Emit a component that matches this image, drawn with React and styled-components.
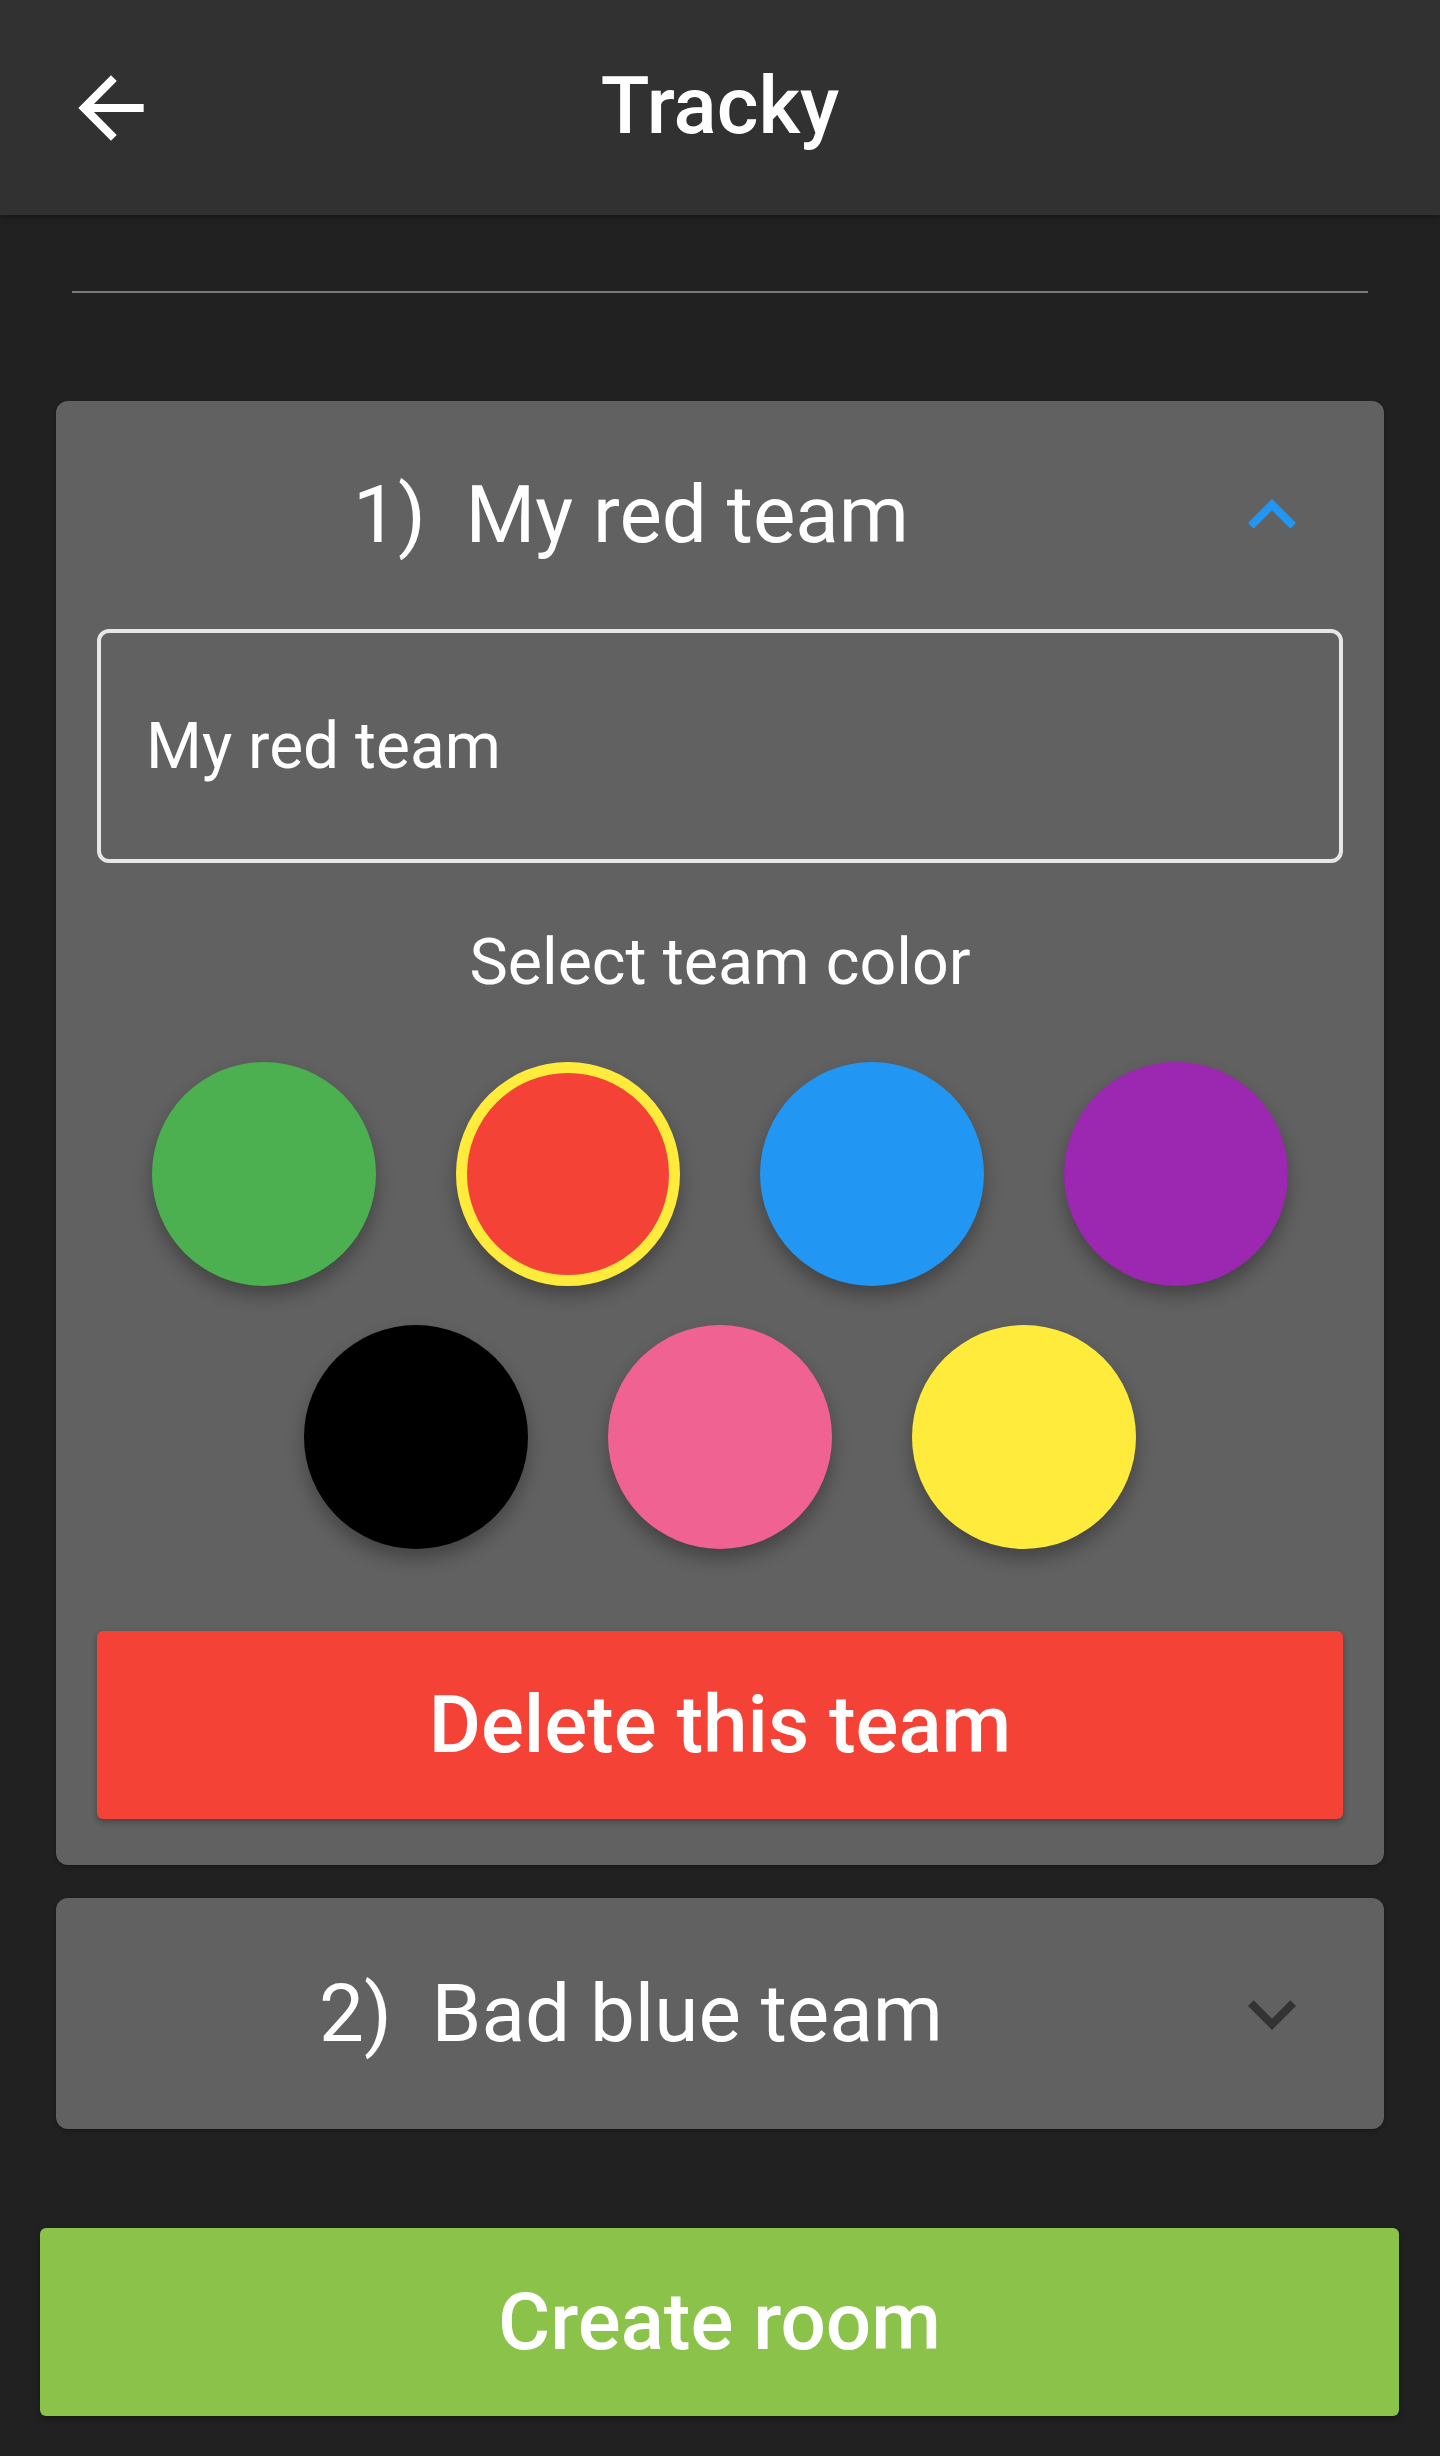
import styled, { createGlobalStyle } from "styled-components";

const GlobalStyle = createGlobalStyle`
* {
  margin: 0;
  padding: 0;
  box-sizing: border-box;
}
body {
  background: #212121;
  font-family: Roboto, "Noto Sans", sans-serif;
  color: #ffffff;
}
`;

const Page = styled.div`
  min-height: 100vh;
  background: #212121;
`;

const TopBar = styled.header`
  height: 215px;
  background: #313131;
  display: grid;
  grid-template-columns: 1fr auto 1fr;
  align-items: center;
  box-shadow: 0 2px 6px rgba(0, 0, 0, 0.35);
  position: relative;
  z-index: 1;
`;

const BackButton = styled.button`
  justify-self: start;
  margin-left: 62px;
  width: 98px;
  height: 98px;
  border: none;
  background: none;
  color: #ffffff;
  display: flex;
  svg {
    width: 98px;
    height: 98px;
  }
`;

const Title = styled.h1`
  font-size: 80px;
  font-weight: 500;
  line-height: 1;
  margin-bottom: 4px;
`;

const Content = styled.main`
  padding: 0 56px;
`;

const Divider = styled.div`
  margin: 76px 16px 0;
  height: 2px;
  background: #7a7a7a;
`;

const CardList = styled.div`
  margin-top: 108px;
  display: flex;
  flex-direction: column;
  gap: 33px;
`;

const Card = styled.section`
  background: #616161;
  border-radius: 12px;
  box-shadow: 0 2px 4px rgba(0, 0, 0, 0.3);
`;

const CardHead = styled.div`
  height: ${(p) => (p.$open ? "228px" : "231px")};
  display: flex;
  align-items: center;
  padding-right: 46px;
`;

const TeamName = styled.h2`
  flex: 1;
  text-align: center;
  font-size: 80px;
  font-weight: 400;
  line-height: 1;
  white-space: pre;
`;

const Chevron = styled.div`
  width: 132px;
  display: flex;
  justify-content: center;
  color: ${(p) => (p.$open ? "#2196f3" : "#333333")};
  svg {
    width: 96px;
    height: 96px;
  }
`;

const CardBody = styled.div`
  padding: 0 41px 46px;
  display: flex;
  flex-direction: column;
`;

const NameInput = styled.input`
  height: 234px;
  width: 100%;
  border: 4px solid #e6e6e6;
  border-radius: 12px;
  background: transparent;
  color: #ffffff;
  font-family: Roboto, "Noto Sans", sans-serif;
  font-size: 64px;
  padding: 0 45px;
  outline: none;
`;

const Label = styled.p`
  margin-top: 61px;
  text-align: center;
  font-size: 64.5px;
  line-height: 76px;
`;

const Swatches = styled.div`
  margin-top: 62px;
  display: flex;
  flex-wrap: wrap;
  justify-content: center;
  gap: 39px 80px;
  padding: 0 20px;
`;

const Swatch = styled.button`
  width: 224px;
  height: 224px;
  border-radius: 50%;
  background: ${(p) => p.$color};
  border: ${(p) => (p.$selected ? "11px solid #ffeb3b" : "none")};
  box-shadow: 0 10px 18px rgba(0, 0, 0, 0.3);
`;

const ActionButton = styled.button`
  height: 188px;
  border: none;
  border-radius: 6px;
  background: ${(p) => p.$bg};
  color: #ffffff;
  font-family: Roboto, "Noto Sans", sans-serif;
  font-size: 80px;
  font-weight: 500;
  box-shadow: 0 3px 6px rgba(0, 0, 0, 0.3);
`;

const DeleteButton = styled(ActionButton)`
  margin-top: 82px;
`;

const CreateButton = styled(ActionButton)`
  width: calc(100% + 31px);
  margin: 99px 0 43px -16px;
`;

const ArrowBack = () => (
  <svg viewBox="0 0 24 24" fill="currentColor">
    <path d="M20 11H7.83l5.59-5.59L12 4l-8 8 8 8 1.41-1.41L7.83 13H20v-2z" />
  </svg>
);

const ExpandLess = () => (
  <svg viewBox="0 0 24 24" fill="currentColor">
    <path d="M12 8l-6 6 1.41 1.41L12 10.83l4.59 4.58L18 14z" />
  </svg>
);

const ExpandMore = () => (
  <svg viewBox="0 0 24 24" fill="currentColor">
    <path d="M16.59 8.59L12 13.17 7.41 8.59 6 10l6 6 6-6z" />
  </svg>
);

const colors = [
  "#4caf50",
  "#f44336",
  "#2196f3",
  "#9c27b0",
  "#000000",
  "#f06292",
  "#ffeb3b",
];

function App() {
  return (
    <Page>
      <GlobalStyle />
      <TopBar>
        <BackButton aria-label="Back">
          <ArrowBack />
        </BackButton>
        <Title>Tracky</Title>
        <div />
      </TopBar>
      <Content>
        <Divider />
        <CardList>
          <Card>
            <CardHead $open>
              <TeamName>{"1)  My red team"}</TeamName>
              <Chevron $open>
                <ExpandLess />
              </Chevron>
            </CardHead>
            <CardBody>
              <NameInput defaultValue="My red team" />
              <Label>Select team color</Label>
              <Swatches>
                {colors.map((c) => (
                  <Swatch key={c} $color={c} $selected={c === "#f44336"} />
                ))}
              </Swatches>
              <DeleteButton $bg="#f44336">Delete this team</DeleteButton>
            </CardBody>
          </Card>
          <Card>
            <CardHead>
              <TeamName>{"2)  Bad blue team"}</TeamName>
              <Chevron>
                <ExpandMore />
              </Chevron>
            </CardHead>
          </Card>
        </CardList>
        <CreateButton $bg="#8bc34a">Create room</CreateButton>
      </Content>
    </Page>
  );
}

export default App;
